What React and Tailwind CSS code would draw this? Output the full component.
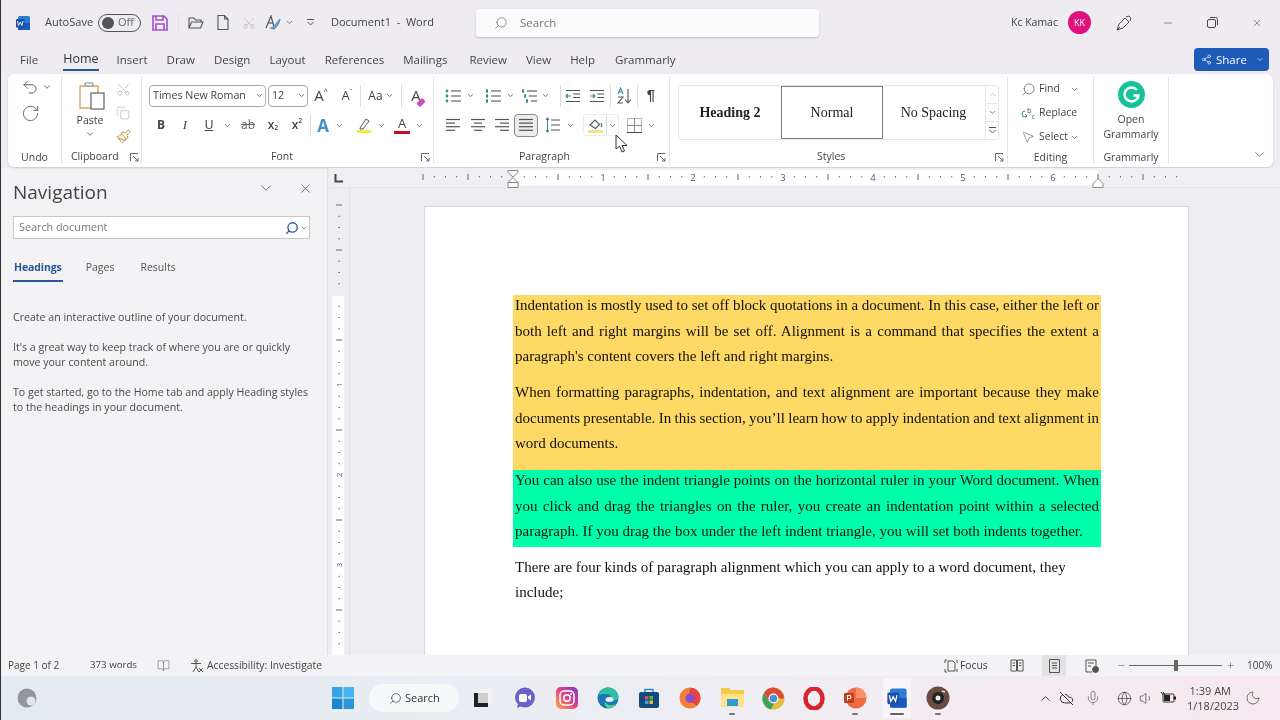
import React from 'react';
import { ChevronDown, ChevronUp, Scissors, Search, X, Minus, Plus, Undo2, RotateCw, Mic, Moon, Volume1, CloudOff, Globe, BookOpen, Share2, Copy, Paintbrush, MousePointer2 } from 'lucide-react';

const Ch = ({ s = 10, c = '#555' }) => <ChevronDown size={s} strokeWidth={2} color={c} />;
const C = ({ c = '', children }) => <div className={'flex items-center justify-center shrink-0 ' + c}>{children}</div>;
const VSep = ({ c = '' }) => <div className={'w-px h-[22px] bg-[#dcdcdc] shrink-0 ' + c} />;
const Launcher = () => (
  <svg width="9" height="9" viewBox="0 0 9 9" fill="none" stroke="#666" strokeWidth="1"><path d="M.5 8V.5H8M3 3l5 5M8 5v3H5" /></svg>
);
const Lines = ({ kind }) => {
  const rows = {
    left: [[1, 15], [1, 10], [1, 15], [1, 10]],
    center: [[1, 15], [4, 12], [1, 15], [4, 12]],
    right: [[1, 15], [6, 15], [1, 15], [6, 15]],
    justify: [[1, 15], [1, 15], [1, 15], [1, 15]],
  }[kind];
  return (
    <svg width="16" height="16" viewBox="0 0 16 16" stroke="#555" strokeWidth="1.2">
      {rows.map((r, i) => <line key={i} x1={r[0]} x2={r[1]} y1={2.5 + i * 3.6} y2={2.5 + i * 3.6} />)}
    </svg>
  );
};
const ListIcon = ({ type }) => (
  <svg width="17" height="16" viewBox="0 0 17 16">
    {[3, 8, 13].map((y, i) => (
      <g key={y}>
        {type === 'bullet' && <circle cx="2" cy={y} r="1.4" fill="#3a8a96" />}
        {type === 'num' && <rect x="1" y={y - 1.7} width="2" height="3.4" fill="#3a8a96" />}
        {type === 'multi' && <rect x={1 + i * 2} y={y - 1.7} width="2" height="3.4" fill="#3a8a96" />}
        <line x1={type === 'multi' ? 6 + i * 2 : 6} x2="16" y1={y} y2={y} stroke="#555" strokeWidth="1.1" />
      </g>
    ))}
  </svg>
);
const Indent = ({ flip }) => (
  <svg width="16" height="16" viewBox="0 0 16 16" stroke="#555" strokeWidth="1.1" fill="none">
    <path d="M1 2.5h14M8 6h7M8 9.5h7M1 13.5h14" />
    <path d={flip ? 'M1 8h5M4 6l2 2-2 2' : 'M6 8H1M3 6 1 8l2 2'} stroke="#3a8a96" />
  </svg>
);
const FontA = ({ bar, fill = '#444' }) => (
  <span className="relative flex flex-col items-center leading-none text-[13px]" style={{ color: fill }}>
    A
    <span className="block w-[16px] h-[3px] mt-[1px]" style={{ background: bar }} />
  </span>
);

const WordLogo = ({ s = 16 }) => (
  <svg width={s} height={s} viewBox="0 0 16 16">
    <rect x="3" y="1" width="12" height="14" rx="1.5" fill="#2b7cd3" />
    <rect x="3" y="8" width="12" height="7" fill="#185abd" />
    <rect x="1" y="4" width="8.5" height="8.5" rx="1" fill="#1a4fa3" />
    <path d="M2.4 6l1.1 4.5L5.2 7l1.7 3.5L8 6" stroke="#fff" strokeWidth=".9" fill="none" />
  </svg>
);

const Para1 = [
  'Indentation is mostly used to set off block quotations in a document. In this case, either the left or',
  'both left and right margins will be set off. Alignment is a command that specifies the extent a',
];
const Para2 = [
  'When formatting paragraphs, indentation, and text alignment are important because they make',
  'documents presentable. In this section, you\u2019ll learn how to apply indentation and text alignment in',
];
const Para3 = [
  'You can also use the indent triangle points on the horizontal ruler in your Word document. When',
  'you click and drag the triangles on the ruler, you create an indentation point within a selected',
];
const J = ({ children }) => <div className="text-justify [text-align-last:justify] [word-spacing:-2px] h-[25.5px] leading-[21.5px]">{children}</div>;
const L = ({ children }) => <div className="h-[25.5px] leading-[21.5px]">{children}</div>;

const HRuler = () => {
  const ticks = [];
  for (let i = -8; i <= 59; i++) {
    const x = 183 + i * 11.25;
    if (i % 8 === 0 && i > 0 && i < 56) continue;
    if (i === 0) continue;
    ticks.push(<line key={i} x1={x} x2={x} y1={i % 4 === 0 ? 6 : 8} y2={i % 4 === 0 ? 12 : 9.5} stroke="#666" strokeWidth="1" />);
  }
  return (
    <svg width="950" height="20" viewBox="0 0 950 20" className="block">
      <rect x="183" y="2" width="585" height="15" fill="#fff" />
      {ticks}
      {[1, 2, 3, 4, 5, 6].map(n => (
        <text key={n} x={183 + n * 90} y="13" fontSize="9.5" fill="#555" textAnchor="middle" fontFamily="Open Sans">{n}</text>
      ))}
      <path d="M178 2.5h10v2l-5 4.5-5-4.5zM178 14.5 183 9.5l5 5zM178 14.5h10v5h-10z" fill="#fff" stroke="#888" strokeWidth="1" />
      <path d="M763 19.5v-4l5-5 5 5v4z" fill="#fff" stroke="#888" strokeWidth="1" />
    </svg>
  );
};
const VRuler = () => {
  const t = [];
  for (let i = -8; i <= 32; i++) {
    const y = 107 + i * 11.25;
    if (i % 8 === 0 && i > 0) continue;
    if (i === 0) continue;
    t.push(<line key={i} x1={i % 4 === 0 ? 6 : 8.5} x2={i % 4 === 0 ? 12 : 10} y1={y} y2={y} stroke="#666" strokeWidth="1" />);
  }
  return (
    <svg width="20" height="467" viewBox="0 0 20 467" className="block">
      <rect x="2" y="108" width="12" height="360" fill="#fff" />
      {t}
      {[1, 2, 3].map(n => (
        <text key={n} transform={`translate(12 ${107 + n * 90}) rotate(-90)`} fontSize="8" fill="#555" textAnchor="middle" fontFamily="Open Sans">{n}</text>
      ))}
    </svg>
  );
};

export default function App() {
  return (
    <div className="w-[1280px] h-[720px] overflow-hidden flex flex-col bg-[#eeecf1] text-[#444] font-['Open_Sans',sans-serif] text-[12px] border-l border-l-[#333] blur-[0.4px]">
      {/* title bar */}
      <div className="h-[45px] flex items-center shrink-0 relative">
        <C c="ml-[14px] w-[16px]"><WordLogo /></C>
        <span className="ml-[14px] text-[11px] w-[48px] whitespace-nowrap">AutoSave</span>
        <div className="ml-[5px] w-[43px] h-[18px] rounded-full border border-[#555] flex items-center pl-[3px] shrink-0">
          <span className="w-[12px] h-[12px] rounded-full bg-[#555]" />
          <span className="ml-[4px] text-[11px] text-[#666]">Off</span>
        </div>
        <C c="ml-[11px] w-[16px]">
          <svg width="16" height="16" viewBox="0 0 16 16" fill="none" stroke="#a24fd0" strokeWidth="1.6"><path d="M1 1h11l3 3v11H1zM4 1v4h7V1M4 15V9h8v6" /></svg>
        </C>
        <div className="ml-[10px] w-px h-[18px] bg-[#ddd]" />
        <C c="ml-[9px] w-[16px]">
          <svg width="16" height="14" viewBox="0 0 16 14" fill="none" stroke="#555" strokeWidth="1.1"><path d="M1 12V2h5l1.5 2H13v2M1 12l2.5-6H15l-2.5 6z" /></svg>
        </C>
        <C c="ml-[12px] w-[14px]">
          <svg width="12" height="15" viewBox="0 0 12 15" fill="none" stroke="#555" strokeWidth="1.1"><path d="M1 .5h6.5L11 4v10.5H1zM7.5.5V4H11" /></svg>
        </C>
        <C c="ml-[12px] w-[14px]"><Scissors size={14} strokeWidth={1} color="#aaa" className="-rotate-90" /></C>
        <C c="ml-[9px] w-[16px]">
          <svg width="16" height="15" viewBox="0 0 16 15" fill="none" strokeWidth="1.2"><path d="M1 13 6 1l3 11" stroke="#555" /><path d="M3 8h5" stroke="#555" /><path d="M6 13c3-1 6-5 9-9-1 5-3 8-6 10z" fill="#7ba7d1" stroke="#5b8fc1" /></svg>
        </C>
        <C c="ml-[3px] w-[10px]"><Ch s={9} /></C>
        <C c="ml-[11px] w-[10px]">
          <svg width="9" height="9" viewBox="0 0 9 9" stroke="#555" strokeWidth="1" fill="none"><path d="M1 1.5h7M1.5 4l3 3 3-3" /></svg>
        </C>
        <span className="ml-[16px] w-[103px] text-[11px] whitespace-pre">Document1  -  Word</span>
        <div className="ml-[42px] w-[343px] h-[28px] bg-[#fbfbfc] rounded-[3px] shadow-[0_1px_2px_rgba(0,0,0,0.2)] flex items-center pl-[18px] shrink-0">
          <Search size={14} strokeWidth={1.2} color="#666" className="-scale-x-100" />
          <span className="ml-[12px] text-[11.5px] text-[#777]">Search</span>
        </div>
        <span className="ml-auto text-[10.5px] whitespace-nowrap">Kc Kamac</span>
        <div className="ml-[10px] w-[23px] h-[23px] rounded-full bg-[#e0107f] text-white text-[9px] flex items-center justify-center">KK</div>
        <C c="ml-[24px] w-[18px]">
          <svg width="16" height="16" viewBox="0 0 16 16" fill="none" stroke="#555" strokeWidth="1"><path d="M1 15l2-6 6-6 4 4-6 6zM1 15l3-3M10 2l3-1 2 2-1 3" /></svg>
        </C>
        <C c="ml-[29px] w-[12px]"><Minus size={12} strokeWidth={1.2} color="#444" /></C>
        <C c="ml-[32px] w-[12px]">
          <svg width="11" height="11" viewBox="0 0 11 11" fill="none" stroke="#444" strokeWidth="1"><rect x=".5" y="2.5" width="8" height="8" rx="1.5" /><path d="M3 .5h5.5a2 2 0 0 1 2 2V8" /></svg>
        </C>
        <C c="ml-[33px] mr-[17px] w-[12px]"><X size={14} strokeWidth={1.1} color="#444" /></C>
      </div>

      {/* tabs */}
      <div className="h-[29px] flex items-center shrink-0 text-[11.5px] relative">
        <span className="ml-[19px]">File</span>
        <span className="ml-[25px] relative font-medium text-[12.5px] text-[#333]">Home<span className="absolute left-0 right-0 top-[19px] h-[2px] bg-[#2b5797]" /></span>
        <span className="ml-[18px]">Insert</span>
        <span className="ml-[19px]">Draw</span>
        <span className="ml-[19px]">Design</span>
        <span className="ml-[19px]">Layout</span>
        <span className="ml-[19px]">References</span>
        <span className="ml-[19px]">Mailings</span>
        <span className="ml-[22px]">Review</span>
        <span className="ml-[19px]">View</span>
        <span className="ml-[19px]">Help</span>
        <span className="ml-[20px]">Grammarly</span>
        <div className="ml-auto mr-[11px] w-[75px] h-[23px] bg-[#1e5bb8] rounded-[4px] text-white flex items-center pl-[7px] text-[11.5px]">
          <Share2 size={11} strokeWidth={1.4} color="#fff" />
          <span className="ml-[4px]">Share</span>
          <C c="ml-[9px] w-[8px]"><Ch s={9} c="#fff" /></C>
        </div>
      </div>

      {/* ribbon */}
      <div className="relative mx-[7px] h-[93px] bg-white rounded-[6px] shadow-[0_1px_2px_rgba(0,0,0,0.15)] flex shrink-0 text-[10.5px]">
        {/* Undo */}
        <div className="w-[54px] flex flex-col relative border-r border-r-[#e4e4e4] my-[3px] shrink-0">
          <div className="flex items-center h-[20px]">
            <C c="ml-[13px] w-[18px]"><Undo2 size={18} strokeWidth={1.2} color="#555" /></C>
            <C c="ml-[3px] w-[10px]"><Ch /></C>
          </div>
          <C c="ml-[12px] w-[20px] h-[26px] mt-[3px]"><RotateCw size={19} strokeWidth={1.1} color="#555" /></C>
          <div className="mt-auto text-center leading-[14px] h-[14px]">Undo</div>
        </div>
        {/* Clipboard */}
        <div className="w-[80px] flex flex-col border-r border-r-[#e4e4e4] my-[3px] shrink-0">
          <div className="flex">
            <div className="ml-[9px] w-[38px] flex flex-col items-center">
              <svg width="28" height="29" viewBox="0 0 28 29" className="mt-[4px] ml-[3px]" fill="none">
                <path d="M2 5h18v22H2z" fill="#fff" stroke="#d9a75a" strokeWidth="1.4" />
                <path d="M7 5V2h8v3z" fill="#fff" stroke="#888" strokeWidth="1" />
                <rect x="13" y="12" width="13" height="16" fill="#fff" stroke="#555" strokeWidth="1.1" />
              </svg>
              <span className="mt-[3px] leading-[14px]">Paste</span>
              <span className="mt-[2px] flex"><Ch /></span>
            </div>
            <div className="ml-[5px] w-[18px] flex flex-col items-center">
              <C c="h-[24px]"><Scissors size={15} strokeWidth={1} color="#aaa" className="-rotate-90" /></C>
              <C c="h-[24px]"><Copy size={14} strokeWidth={1} color="#aaa" /></C>
              <C c="h-[23px]"><Paintbrush size={15} strokeWidth={1.6} color="#c98f3a" /></C>
            </div>
          </div>
          <div className="mt-auto flex items-center h-[14px] pl-[9px]">
            <span>Clipboard</span>
            <span className="ml-[11px] flex"><Launcher /></span>
          </div>
        </div>
        {/* Font */}
        <div className="w-[292px] flex flex-col border-r border-r-[#e4e4e4] my-[3px] shrink-0">
          <div className="flex items-center h-[21px] mt-[8px]">
            <div className="ml-[7px] w-[117px] h-[22px] border border-[#aaa] rounded-[4px] flex items-center pl-[3px] shrink-0 text-[10.7px]">
              <span className="flex-1 whitespace-nowrap">Times New Roman</span><C c="w-[12px]"><Ch s={9} /></C>
            </div>
            <div className="ml-[2px] w-[40px] h-[22px] border border-[#aaa] rounded-[4px] flex items-center pl-[3px] shrink-0 text-[10.7px]">
              <span className="flex-1">12</span><C c="w-[12px]"><Ch s={9} /></C>
            </div>
            <C c="ml-[4px] w-[18px] text-[15px]">A<span className="text-[7px] -mt-[6px]">^</span></C>
            <C c="ml-[8px] w-[18px] text-[13px]">A<span className="text-[7px] -mt-[6px]">ˇ</span></C>
            <VSep c="ml-[4px]" />
            <C c="ml-[5px] w-[30px] text-[12px]">Aa<span className="ml-[2px] flex"><Ch s={9} /></span></C>
            <VSep c="ml-[5px]" />
            <C c="ml-[5px] w-[18px] relative text-[15px]">A<span className="absolute right-0 bottom-[2px] w-[8px] h-[5px] bg-[#c94fb4] rounded-[1px] -rotate-45" /></C>
          </div>
          <div className="flex items-center h-[24px] mt-[7px]">
            <C c="ml-[10px] w-[18px] font-bold text-[12px]">B</C>
            <C c="ml-[6px] w-[18px] font-['Liberation_Serif'] italic text-[13px]">I</C>
            <C c="ml-[6px] w-[18px] underline font-['Liberation_Sans'] text-[12px]">U</C>
            <C c="ml-[4px] w-[10px]"><Ch s={9} /></C>
            <C c="ml-[7px] w-[18px] line-through text-[12px] text-[#666]">ab</C>
            <C c="ml-[7px] w-[18px] text-[12px] font-semibold">x<span className="text-[7px] mt-[7px]">2</span></C>
            <C c="ml-[6px] w-[18px] text-[12px] font-semibold">x<span className="text-[7px] -mt-[7px]">2</span></C>
            <VSep c="ml-[4px]" />
            <C c="ml-[4px] w-[16px] text-[17px] font-bold text-[#4a90c8] leading-none">A</C>
            <C c="ml-[3px] w-[10px]"><Ch s={9} /></C>
            <C c="ml-[11px] w-[18px]">
              <svg width="16" height="16" viewBox="0 0 16 16" fill="none"><path d="M4 11 10 2l3 2-6 8H4z" stroke="#555" strokeWidth="1" /><rect x="1" y="13" width="14" height="3" fill="#f5ec3c" /></svg>
            </C>
            <C c="ml-[3px] w-[10px]"><Ch s={9} /></C>
            <C c="ml-[7px] w-[18px]"><FontA bar="#c8102e" /></C>
            <C c="ml-[3px] w-[10px]"><Ch s={9} /></C>
          </div>
          <div className="mt-auto flex items-center h-[14px]">
            <span className="ml-[129px]">Font</span>
            <span className="ml-auto mr-[3px] flex"><Launcher /></span>
          </div>
        </div>
        {/* Paragraph */}
        <div className="w-[236px] flex flex-col border-r border-r-[#e4e4e4] my-[3px] shrink-0">
          <div className="flex items-center h-[21px] mt-[8px]">
            <C c="ml-[10px] w-[18px]"><ListIcon type="bullet" /></C>
            <C c="ml-[3px] w-[10px]"><Ch s={9} /></C>
            <C c="ml-[9px] w-[18px]"><ListIcon type="num" /></C>
            <C c="ml-[3px] w-[10px]"><Ch s={9} /></C>
            <C c="ml-[5px] w-[18px]"><ListIcon type="multi" /></C>
            <C c="ml-[2px] w-[10px]"><Ch s={9} /></C>
            <VSep c="ml-[10px]" />
            <C c="ml-[3px] w-[18px]"><Indent /></C>
            <C c="ml-[6px] w-[18px]"><Indent flip /></C>
            <VSep c="ml-[4px]" />
            <C c="ml-[4px] w-[18px]">
              <svg width="18" height="18" viewBox="0 0 18 18" fill="none" stroke="#555" strokeWidth="1.1"><path d="M3 7 5.5 1 8 7M4 5h3" stroke="#3a8a96" /><path d="M3 10h5l-5 6h5" /><path d="M13 2v14M10 12.5l3 3.5 3-3.5" /></svg>
            </C>
            <VSep c="ml-[4px]" />
            <C c="ml-[4px] w-[18px] text-[15px] font-bold font-['Liberation_Sans'] text-[#444]">¶</C>
          </div>
          <div className="flex items-center h-[24px] mt-[7px]">
            <C c="ml-[10px] w-[18px]"><Lines kind="left" /></C>
            <C c="ml-[7px] w-[18px]"><Lines kind="center" /></C>
            <C c="ml-[6px] w-[18px]"><Lines kind="right" /></C>
            <C c="ml-[3px] w-[24px] h-[23px] bg-[#ececec] border border-[#8a8a8a] rounded-[4px]"><Lines kind="justify" /></C>
            <C c="ml-[6px] w-[18px]">
              <svg width="16" height="16" viewBox="0 0 16 16" fill="none" stroke="#555" strokeWidth="1.1"><path d="M6 3h9M6 8h9M6 13h9" /><path d="M2.5 1v14M1 3l1.5-2L4 3M1 13l1.5 2L4 13" stroke="#3a8a96" /></svg>
            </C>
            <C c="ml-[3px] w-[10px]"><Ch s={9} /></C>
            <C c="ml-[8px] w-[36px] h-[22px] border border-[#ececec] rounded-[3px]">
              <div className="w-[23px] flex items-center justify-center border-r border-r-[#ddd] h-full">
                <svg width="17" height="17" viewBox="0 0 17 17" fill="none"><path d="M3 8l5-5 4.500 4.500-4 4z" stroke="#555" strokeWidth="1.1" /><path d="M14 6c1 2 1 3 0 4" stroke="#3a8a96" strokeWidth="1.2" /><rect x="1" y="13" width="15" height="3" fill="#f4e38a" /></svg>
              </div>
              <div className="flex-1 flex items-center justify-center"><Ch s={9} /></div>
            </C>
            <C c="ml-[6px] w-[18px]">
              <svg width="15" height="15" viewBox="0 0 15 15" stroke="#888" strokeWidth="1" fill="none"><rect x=".5" y=".5" width="14" height="14" stroke="#bbb" /><path d="M7.500 0v15M0 7.500h15" /><path d="M0 14.500h15" stroke="#444" /></svg>
            </C>
            <C c="ml-[3px] w-[10px]"><Ch s={9} /></C>
          </div>
          <div className="mt-auto flex items-center h-[14px]">
            <span className="ml-[85px]">Paragraph</span>
            <span className="ml-auto mr-[3px] flex"><Launcher /></span>
          </div>
        </div>
        {/* Styles */}
        <div className="w-[338px] flex flex-col border-r border-r-[#e4e4e4] my-[3px] shrink-0">
          <div className="ml-[8px] mt-[8px] w-[321px] h-[55px] flex border border-[#e6e6e6] rounded-[3px] font-['Liberation_Serif'] text-[14px] text-[#222]">
            <C c="w-[102px] font-bold">Heading 2</C>
            <C c="w-[102px] border-[1.5px] border-[#808080]">Normal</C>
            <C c="w-[101px]">No Spacing</C>
            <div className="w-[15px] flex flex-col border-l border-l-[#e6e6e6] ml-[1px]">
              <C c="flex-1 border-b border-b-[#e6e6e6]"><ChevronUp size={9} strokeWidth={2} color="#bbb" /></C>
              <C c="flex-1 border-b border-b-[#e6e6e6]"><Ch s={9} /></C>
              <C c="flex-1">
                <svg width="9" height="9" viewBox="0 0 9 9" stroke="#555" strokeWidth="1" fill="none"><path d="M1 1.500h7M1.500 4l3 3 3-3" /></svg>
              </C>
            </div>
          </div>
          <div className="mt-auto flex items-center h-[14px]">
            <span className="ml-[147px]">Styles</span>
            <span className="ml-auto mr-[3px] flex"><Launcher /></span>
          </div>
        </div>
        {/* Editing */}
        <div className="w-[86px] flex flex-col border-r border-r-[#e4e4e4] my-[3px] shrink-0">
          <div className="flex items-center h-[24px] pl-[12px]">
            <C c="w-[16px]"><Search size={15} strokeWidth={1.1} color="#555" className="-scale-x-100" /></C>
            <span className="ml-[3px]">Find</span>
            <C c="ml-[10px] w-[10px]"><Ch s={9} /></C>
          </div>
          <div className="flex items-center h-[24px] pl-[12px]">
            <C c="w-[16px]">
              <svg width="15" height="15" viewBox="0 0 15 15" fill="none"><path d="M4 5a3 3 0 0 0 0 6l2-1M4 8l2 2-2 1" stroke="#3a8a96" strokeWidth="1" /><text x="6" y="6.500" fontSize="7.500" fill="#444">b</text><text x="10.500" y="13" fontSize="7.500" fill="#3a8a96">c</text></svg>
            </C>
            <span className="ml-[3px]">Replace</span>
          </div>
          <div className="flex items-center h-[24px] pl-[12px]">
            <C c="w-[16px]"><MousePointer2 size={14} strokeWidth={1} color="#555" /></C>
            <span className="ml-[3px]">Select</span>
            <C c="ml-[2px] w-[10px]"><Ch s={9} /></C>
          </div>
          <div className="mt-auto text-center h-[14px] leading-[14px]">Editing</div>
        </div>
        {/* Grammarly */}
        <div className="w-[75px] flex flex-col items-center border-r border-r-[#e4e4e4] my-[3px] shrink-0">
          <svg width="27" height="27" viewBox="0 0 27 27" className="mt-[4px]">
            <circle cx="13.500" cy="13.500" r="13.500" fill="#15c39a" />
            <path d="M19 9a7 7 0 1 0 1.500 5.500h-5" fill="none" stroke="#fff" strokeWidth="2.400" />
          </svg>
          <span className="mt-[4px] leading-[15px]">Open</span>
          <span className="leading-[15px]">Grammarly</span>
          <div className="mt-auto h-[14px] leading-[14px]">Grammarly</div>
        </div>
        <div className="flex-1 flex items-end justify-end pr-[6px] pb-[5px]">
          <ChevronDown size={15} strokeWidth={1.2} color="#555" />
        </div>
        {/* mouse pointer over the ribbon */}
        <svg width="13" height="19" viewBox="0 0 13 19" className="absolute left-[607px] top-[60px]">
          <path d="M1 1v14l3.500-3 2.500 6 2.500-1-2.500-5.500H12z" fill="#fff" stroke="#333" strokeWidth="1" />
        </svg>
      </div>

      {/* body */}
      <div className="flex-1 min-h-0 flex mt-[1px]">
        <div className="w-[327px] shrink-0 bg-[#f3f2f5] flex flex-col pl-[12px] pr-[18px] border-r border-r-[#dedede]">
          <div className="flex items-center mt-[10px] h-[28px]">
            <span className="text-[19px] text-[#444]">Navigation</span>
            <ChevronDown size={18} strokeWidth={1.1} color="#555" className="ml-auto mr-[23px] -mt-[8px]" />
            <X size={15} strokeWidth={1.1} color="#444" className="-mr-[4px] -mt-[8px]" />
          </div>
          <div className="mt-[10px] h-[23px] w-[297px] bg-white border border-[#c8c8c8] flex items-center pl-[5px] text-[10.8px] text-[#777] shrink-0">
            <span>Search document</span>
            <Search size={14} strokeWidth={2.2} color="#2b5797" className="ml-auto -scale-x-100" />
            <span className="mr-[1px] ml-[1px] flex"><Ch s={8} /></span>
          </div>
          <div className="flex items-start mt-[21px] text-[10.5px] text-[#555]">
            <span className="relative font-bold text-[#2b5797] tracking-[-0.1px] ml-[1px]">
              Headings<span className="absolute -left-[1px] -right-[1px] top-[20px] h-[2px] bg-[#2b5797]" />
            </span>
            <span className="ml-[24px]">Pages</span>
            <span className="ml-[26px]">Results</span>
          </div>
          <div className="mt-[34px] text-[10.6px] leading-[15px] text-[#4a4a4a] whitespace-nowrap">
            <p>Create an interactive outline of your document.</p>
            <p className="mt-[15px]">It's a great way to keep track of where you are or quickly<br />move your content around.</p>
            <p className="mt-[15px]">To get started, go to the Home tab and apply Heading styles<br />to the headings in your document.</p>
          </div>
        </div>
        <div className="flex-1 flex flex-col min-w-0 ml-[2px]">
          <div className="h-[20px] shrink-0 flex border-b border-b-[#e6e5e9] bg-[#f0eff3] relative">
            <HRuler />
            <svg width="9" height="9" viewBox="0 0 9 9" className="absolute left-[4px] top-[6px]" stroke="#444" strokeWidth="2" fill="none"><path d="M1.500 0v7.500H9" /></svg>
          </div>
          <div className="flex-1 min-h-0 flex">
            <div className="w-[20px] shrink-0 bg-[#eeedf1] border-r border-r-[#e2e1e5] overflow-hidden"><VRuler /></div>
            <div className="flex-1 min-w-0 overflow-hidden bg-[#eeedf1] pl-[74px] pt-[18px]">
              <div className="w-[765px] h-[600px] bg-white border border-[#d8d8da] pt-[88px] pl-[88px] font-['Liberation_Serif'] text-[15px] leading-[25.5px] text-[#111]">
                <div className="w-[588px]">
                  <div className="bg-[#ffd966] px-[2px]">
                    {Para1.map(t => <J key={t}>{t}</J>)}
                    <L>paragraph's content covers the left and right margins.</L>
                    <div className="h-[10.5px]" />
                    {Para2.map(t => <J key={t}>{t}</J>)}
                    <L>word documents.</L>
                    <div className="h-[11.5px]" />
                  </div>
                  <div className="bg-[#00ffaa] px-[2px]">
                    {Para3.map(t => <J key={t}>{t}</J>)}
                    <L>paragraph. If you drag the box under the left indent triangle, you will set both indents together.</L>
                  </div>
                  <div className="px-[2px] pt-[10px]">
                    <L>There are four kinds of paragraph alignment which you can apply to a word document, they</L>
                    <L>include;</L>
                  </div>
                </div>
              </div>
            </div>
          </div>
        </div>
      </div>

      {/* status bar */}
      <div className="h-[21px] shrink-0 bg-[#f3f2f5] flex items-center text-[10px] text-[#444] relative z-10">
        <span className="ml-[7px] w-[49px] whitespace-nowrap">Page 1 of 2</span>
        <span className="ml-[33px] w-[47px] text-[9.7px] whitespace-nowrap">373 words</span>
        <BookOpen size={13} strokeWidth={1} color="#555" className="ml-[20px]" />
        <svg width="14" height="14" viewBox="0 0 14 14" className="ml-[20px]" fill="none" stroke="#555" strokeWidth="1"><circle cx="6" cy="2" r="1.300" /><path d="M1 4.500h10M6 5v3l-3 5M6 8l3 5M9 9l4 4M13 9l-4 4" /></svg>
        <span className="ml-[3px] w-[115px] text-[10.3px] whitespace-nowrap">Accessibility: Investigate</span>
        <svg width="14" height="14" viewBox="0 0 14 14" className="ml-[622px]" fill="none" stroke="#555" strokeWidth="1"><path d="M4 2h5l2 2v8H4zM1 4V1h2M1 10v3h2M13 4V1M13 10v3" /></svg>
        <span className="ml-[2px] w-[27px] text-[10.3px] whitespace-nowrap">Focus</span>
        <svg width="14" height="13" viewBox="0 0 14 13" className="ml-[23px]" fill="none" stroke="#555" strokeWidth="1"><path d="M1 1h5.500v11H1zM7.500 1H13v11H7.500zM2.500 4h2.500M2.500 6.500h2.500M9 4h2.500M9 6.500h2.500" /></svg>
        <div className="ml-[18px] w-[24px] h-[21px] bg-[#e3e2e5] flex items-center justify-center">
          <svg width="11" height="14" viewBox="0 0 11 14" fill="none" stroke="#555" strokeWidth="1"><path d="M.5.5h10v13H.5zM3 4h5M3 6.500h5M3 9h5" /></svg>
        </div>
        <svg width="14" height="14" viewBox="0 0 14 14" className="ml-[19px]" fill="none" stroke="#555" strokeWidth="1"><path d="M1 1h10v7M1 1v12h6M3 4h6M3 7h3" /><circle cx="10.500" cy="10.500" r="3" fill="#555" /></svg>
        <Minus size={9} strokeWidth={1.4} color="#555" className="ml-[18px]" />
        <div className="ml-[3px] w-[93px] h-px bg-[#666] relative">
          <span className="absolute left-[45px] -top-[5px] w-[4px] h-[11px] bg-[#666]" />
        </div>
        <Plus size={9} strokeWidth={1.4} color="#555" className="ml-[4px]" />
        <span className="ml-[12px]">100%</span>
      </div>

      {/* taskbar */}
      <div className="h-[44px] shrink-0 bg-gradient-to-r from-[#e2ebf0] via-[#edeef4] to-[#f7e9ef] flex items-center text-[11px] text-[#333]">
        <C c="ml-[14px] w-[24px]">
          <svg width="22" height="22" viewBox="0 0 22 22"><circle cx="11" cy="11" r="9.500" fill="#8f96a0" /><circle cx="15" cy="14" r="4.500" fill="#dfe4e8" /></svg>
        </C>
        <C c="ml-[292px] w-[24px]">
          <svg width="22" height="22" viewBox="0 0 22 22"><path d="M0 0h10.500v10.500H0z" fill="#33a5e8" /><path d="M11.500 0H22v10.500H11.500z" fill="#46b4ee" /><path d="M0 11.500h10.500V22H0z" fill="#1c86cf" /><path d="M11.500 11.500H22V22H11.500z" fill="#2a97dc" /></svg>
        </C>
        <div className="ml-[14px] w-[90px] h-[28px] rounded-full bg-[#f7f8fa] flex items-center pl-[20px] text-[11px]">
          <Search size={13} strokeWidth={1.3} color="#333" className="-scale-x-100" />
          <span className="ml-[3px]">Search</span>
        </div>
        <C c="ml-[12px] w-[24px]">
          <svg width="20" height="20" viewBox="0 0 20 20"><rect x="6" y="1" width="13" height="14" fill="#f3f3f3" /><rect x="1" y="5" width="14" height="14" fill="#cfcfcf" /><path d="M1 5h4v10h10v4H1z" fill="#222" /></svg>
        </C>
        <C c="ml-[18px] w-[24px]">
          <svg width="22" height="22" viewBox="0 0 22 22"><circle cx="11" cy="10.500" r="10" fill="#6a63c9" /><rect x="5" y="7" width="8" height="8" rx="2" fill="#fff" /><path d="M14 9.500l3-2v6l-3-2z" fill="#fff" /><path d="M4 17l-1 4 5-2z" fill="#6a63c9" /></svg>
        </C>
        <C c="ml-[18px] w-[24px]">
          <svg width="22" height="22" viewBox="0 0 22 22">
            <defs><linearGradient id="ig" x1="0" y1="1" x2="1" y2="0"><stop offset="0" stopColor="#f9b13b" /><stop offset=".5" stopColor="#e33f87" /><stop offset="1" stopColor="#7d3cc8" /></linearGradient></defs>
            <rect width="22" height="22" rx="5" fill="url(#ig)" /><rect x="4" y="4" width="14" height="14" rx="4" fill="none" stroke="#fff" strokeWidth="1.500" /><circle cx="11" cy="11" r="3.200" fill="none" stroke="#fff" strokeWidth="1.500" /><circle cx="15" cy="7" r="1" fill="#fff" />
          </svg>
        </C>
        <C c="ml-[17px] w-[24px]">
          <svg width="22" height="22" viewBox="0 0 22 22"><circle cx="11" cy="11" r="10.500" fill="#1976b8" /><path d="M1.500 8C3 3 7 .5 11 .5c6 0 10.500 4.500 10.500 9 0 3-2.500 4-5 4-2 0-3.500-.5-3.500-1.500 2-1 1.500-5-3-5-4 0-7 1-8.500.5z" fill="#30c0a0" /><path d="M8 13c0 4 4 6 8 5l3-1c-2 3-5 4.500-8 4-2-1-4-4-3-8z" fill="#5fd18a" /><ellipse cx="12.500" cy="12.500" rx="4" ry="2.500" fill="#e9eff3" /></svg>
        </C>
        <C c="ml-[17px] w-[24px]">
          <svg width="22" height="22" viewBox="0 0 22 22"><path d="M7 5V2.500h8V5" fill="none" stroke="#2b8ac9" strokeWidth="1.500" /><rect x="1" y="5" width="20" height="16" rx="2" fill="#114a7d" /><rect x="7" y="9" width="3.500" height="3.500" fill="#e84c3d" /><rect x="11.500" y="9" width="3.500" height="3.500" fill="#58b947" /><rect x="7" y="13.500" width="3.500" height="3.500" fill="#3aa0e0" /><rect x="11.500" y="13.500" width="3.500" height="3.500" fill="#f4bd2c" /></svg>
        </C>
        <C c="ml-[17px] w-[24px]">
          <svg width="22" height="22" viewBox="0 0 22 22"><circle cx="11" cy="11" r="10.500" fill="#f2803a" /><path d="M11 .5A10.500 10.500 0 0 1 21.500 11c0 4-2 6-4 8-3-5-8-2-11-5 2 0 3-1 4-3-1-3 0-7 1-10.500z" fill="#e8433f" /><circle cx="11" cy="11" r="4.500" fill="#8a4bd0" /></svg>
        </C>
        <C c="ml-[18px] w-[24px] relative">
          <svg width="23" height="22" viewBox="0 0 23 22"><path d="M0 1h8l2 2h13v17H0z" fill="#f7c948" /><path d="M0 7h23v13H0z" fill="#fde28a" /><rect x="6" y="12" width="11" height="7" fill="#2e9bd9" /></svg>
          <span className="absolute left-[9px] top-[26px] w-[6px] h-[2px] bg-[#777] rounded-full" />
        </C>
        <C c="ml-[17px] w-[24px]">
          <svg width="23" height="23" viewBox="0 0 23 23"><circle cx="11.500" cy="11.500" r="11" fill="#e0c13d" /><path d="M11.500.5A11 11 0 0 0 2 6l5 9 4.500-3.500H22A11 11 0 0 0 11.500.5z" fill="#d94a3b" /><path d="M2 6a11 11 0 0 0 7 16.500l4-8L7 15z" fill="#3da35a" /><circle cx="11.500" cy="11.500" r="5" fill="#fff" /><circle cx="11.500" cy="11.500" r="3.800" fill="#4a8fe0" /></svg>
        </C>
        <C c="ml-[17px] w-[24px]">
          <svg width="22" height="23" viewBox="0 0 22 23"><ellipse cx="11" cy="11.500" rx="8.500" ry="10" fill="none" stroke="#d9232e" strokeWidth="4.500" /></svg>
        </C>
        <C c="ml-[17px] w-[24px] relative">
          <svg width="24" height="22" viewBox="0 0 24 22"><circle cx="13" cy="11" r="10.500" fill="#ed6c47" /><path d="M13 .5A10.500 10.500 0 0 1 23.500 11H13z" fill="#ff8f6b" /><rect x="1" y="6" width="10" height="10" rx="1" fill="#c43e1c" /><path d="M4.500 13.500v-5h2a1.500 1.500 0 0 1 0 3h-2" stroke="#fff" fill="none" strokeWidth="1.100" /></svg>
          <span className="absolute left-[9px] top-[26px] w-[6px] h-[2px] bg-[#777] rounded-full" />
        </C>
        <C c="ml-[16px] w-[28px] h-[40px] bg-[#f7f5f8] relative">
          <WordLogo s={22} />
          <span className="absolute left-[7px] top-[35px] w-[14px] h-[2px] bg-[#666] rounded-full" />
        </C>
        <C c="ml-[15px] w-[24px] relative">
          <svg width="24" height="24" viewBox="0 0 24 24"><circle cx="12" cy="12" r="11.500" fill="#6a4a42" /><circle cx="12" cy="12" r="6" fill="#222" /><circle cx="12" cy="12" r="2.500" fill="#eee" /><path d="M16 5l3 1" stroke="#ddd" strokeWidth="1.500" /></svg>
          <span className="absolute left-[9px] top-[27px] w-[6px] h-[2px] bg-[#777] rounded-full" />
        </C>
        <ChevronUp size={15} strokeWidth={1.5} color="#333" className="ml-[88px]" />
        <CloudOff size={15} strokeWidth={1.6} color="#333" className="ml-[6px]" />
        <Mic size={16} strokeWidth={1.1} color="#666" className="ml-[11px]" />
        <Globe size={15} strokeWidth={1.2} color="#444" className="ml-[16px]" />
        <Volume1 size={15} strokeWidth={1.2} color="#444" className="ml-[7px]" />
        <svg width="16" height="12" viewBox="0 0 16 12" className="ml-[6px]"><rect x="3" y="2" width="11" height="8" rx="1" fill="none" stroke="#333" /><rect x="4" y="3" width="6" height="6" fill="#222" /><path d="M14 5h2v2h-2zM1 0l2 3M3 0l2 3" stroke="#222" /></svg>
        <div className="ml-[11px] w-[44px] text-right text-[11px] leading-[15px] text-[#444] whitespace-nowrap -mt-[1px]">1:39 AM<br />1/18/2023</div>
        <Moon size={16} strokeWidth={1.1} color="#444" className="ml-[14px]" />
      </div>
    </div>
  );
}
